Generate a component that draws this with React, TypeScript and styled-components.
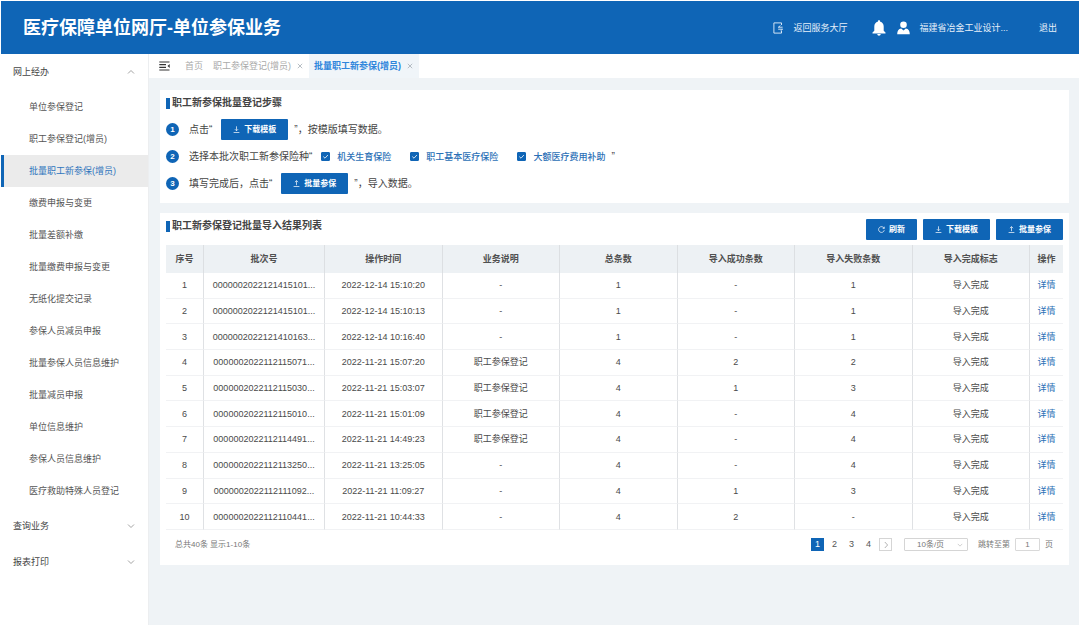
import React from 'react';
import styled, { createGlobalStyle, css } from 'styled-components';

const blue = '#0f65b6';
const pageBg = '#eff3f6';

const GlobalStyle = createGlobalStyle`
  *, *::before, *::after { box-sizing: border-box; }
  body {
    margin: 0;
    background: #fff;
    color: #4a4a4a;
    font-family: "Liberation Sans", "Noto Sans CJK SC", sans-serif;
    font-size: 9px;
    line-height: 14px;
  }
  button, input, select { font: inherit; color: inherit; margin: 0; }
  button { border: 0; padding: 0; background: none; cursor: pointer; }
  a { color: inherit; text-decoration: none; }
  h1, h2, ul, ol { margin: 0; padding: 0; }
  ul, ol { list-style: none; }
  svg { display: block; flex: none; }
`;

const Page = styled.div`
  min-height: 100vh;
  padding: 1px 1px 2px;
  display: grid;
  grid-template-rows: 53px 1fr;
`;

const Header = styled.header`
  display: flex;
  align-items: center;
  justify-content: space-between;
  padding: 0 22px;
  background: ${blue};
  color: #fff;
`;

const SiteTitle = styled.h1`
  font-size: 18px;
  line-height: 26px;
  font-weight: 700;
`;

const HeaderTools = styled.div`
  display: flex;
  align-items: center;
  color: #e6f0fa;
`;

const HeaderLink = styled.a`
  display: flex;
  align-items: center;
  gap: 10px;
  margin-right: 25px;
`;

const IconButton = styled.button`
  color: #fff;
  margin-right: 11px;
`;

const Account = styled.a`
  display: flex;
  align-items: center;
  gap: 9px;
  margin-right: 31px;
  svg { color: #fff; }
`;

const Body = styled.div`
  display: grid;
  grid-template-columns: 148px minmax(0, 1fr);
`;

const Sidebar = styled.nav`
  background: #fff;
  border-right: 1px solid #eceef0;
`;

const GroupButton = styled.button`
  width: 100%;
  height: 36px;
  padding: 0 13px 0 12px;
  display: flex;
  align-items: center;
  justify-content: space-between;
  color: #444;
  svg { color: #999; }
`;

const MenuList = styled.ul`
  padding: 1px 0;
`;

const MenuLink = styled.a<{ $active?: boolean }>`
  display: flex;
  align-items: center;
  height: 32px;
  padding-left: 25px;
  border-left: 3px solid transparent;
  color: #555;
  ${(p) =>
    p.$active &&
    css`
      background: #ebebeb;
      border-left-color: ${blue};
      color: #2f75bd;
    `}
`;

const Main = styled.main`
  background: ${pageBg};
`;

const TabBar = styled.div`
  display: flex;
  align-items: stretch;
  height: 24px;
  padding-left: 10px;
  background: #fff;
`;

const MenuToggle = styled.button`
  margin-right: 10px;
  color: #333;
`;

const Tab = styled.div<{ $active?: boolean }>`
  display: flex;
  align-items: center;
  gap: 5px;
  padding: 0 5px;
  color: #aaa;
  ${(p) =>
    p.$active &&
    css`
      background: #f0f5f9;
      color: #2f86dc;
      font-weight: 700;
    `}
`;

const TabClose = styled.button`
  width: 8px;
  height: 8px;
  display: grid;
  place-items: center;
  color: #a5adb5;
`;

const Content = styled.div`
  display: flex;
  flex-direction: column;
  gap: 10px;
  padding: 12px 10px 0 11px;
`;

const Card = styled.section`
  background: #fff;
  padding: 6px 6px 0;
`;

const CardTitle = styled.h2`
  display: flex;
  align-items: center;
  gap: 2px;
  font-size: 10px;
  line-height: 14px;
  font-weight: 700;
  color: #444;
  &::before {
    content: "";
    width: 4px;
    height: 11px;
    background: ${blue};
  }
`;

const Steps = styled.ol`
  display: flex;
  flex-direction: column;
  gap: 6px;
  padding: 9px 0;
`;

const Step = styled.li`
  display: flex;
  align-items: center;
  gap: 6px;
  height: 21px;
  font-size: 10px;
  color: #444;
`;

const StepNumber = styled.span`
  width: 13px;
  height: 13px;
  margin-right: 4px;
  border-radius: 50%;
  background: ${blue};
  color: #fff;
  font-size: 8px;
  font-weight: 700;
  line-height: 13px;
  text-align: center;
`;

const StepLead = styled.span`
  padding-right: 3px;
`;

const PrimaryButton = styled.button`
  display: flex;
  align-items: center;
  justify-content: center;
  gap: 4px;
  height: 21px;
  padding: 0 12px;
  border-radius: 1px;
  background: ${blue};
  color: #fff;
  font-size: 8px;
  font-weight: 700;
  white-space: nowrap;
`;

const Choices = styled.div`
  display: flex;
  gap: 19px;
`;

const Choice = styled.label`
  display: flex;
  align-items: center;
  gap: 7px;
  font-size: 9px;
  font-weight: 500;
  color: #2b70b6;
`;

const CheckFrame = styled.span`
  display: grid;
  place-items: center;
  > * { grid-area: 1 / 1; }
  svg { color: #fff; pointer-events: none; }
`;

const Checkbox = styled.input`
  appearance: none;
  width: 9px;
  height: 9px;
  border: 1px solid ${blue};
  border-radius: 1px;
  &:checked { background: ${blue}; }
`;

const CardHead = styled.div`
  display: flex;
  align-items: flex-start;
  justify-content: space-between;
  padding-bottom: 5px;
`;

const Actions = styled.div`
  display: flex;
  gap: 6px;
`;

const Table = styled.table`
  width: 100%;
  height: 285px;
  table-layout: fixed;
  border-collapse: separate;
  border-spacing: 0;
  text-align: center;
`;

const Col = styled.col<{ $width?: number }>`
  width: ${(p) => (p.$width ? `${p.$width}px` : 'auto')};
`;

const Th = styled.th`
  height: 28px;
  padding: 0;
  background: #edf1f4;
  border-right: 1px solid #dcdfe2;
  color: #505050;
  font-weight: 700;
  &:last-child { border-right: 0; }
`;

const Td = styled.td`
  padding: 0;
  border-right: 1px solid #dfe1e4;
  border-bottom: 1px solid #f1f2f4;
  white-space: nowrap;
  &:last-child { border-right: 0; }
`;

const DetailLink = styled.a`
  color: #2b70b6;
`;

const TableFoot = styled.div`
  display: flex;
  align-items: center;
  justify-content: space-between;
  padding: 8px 10px 14px 9px;
  font-size: 8px;
  line-height: 12px;
  color: #777;
`;

const Pager = styled.div`
  display: flex;
  align-items: center;
`;

const PageButton = styled.button<{ $active?: boolean; $boxed?: boolean }>`
  width: 13px;
  height: 13px;
  display: grid;
  place-items: center;
  margin-right: 4px;
  font-size: 9px;
  line-height: 13px;
  color: ${(p) => (p.$active ? '#fff' : p.$boxed ? '#aaa' : '#555')};
  background: ${(p) => (p.$active ? blue : 'transparent')};
  border: ${(p) => (p.$boxed ? '1px solid #d5d5d5' : '0')};
`;

const SelectFrame = styled.span`
  display: grid;
  align-items: center;
  margin: 0 10px 0 8px;
  > * { grid-area: 1 / 1; }
  svg { justify-self: end; margin-right: 5px; color: #bbb; pointer-events: none; }
`;

const PageSize = styled.select`
  appearance: none;
  width: 64px;
  height: 13px;
  padding: 0 0 0 12px;
  border: 1px solid #d5d5d5;
  border-radius: 1px;
  background: #fff;
  line-height: 11px;
`;

const Jump = styled.label`
  display: flex;
  align-items: center;
  gap: 5px;
`;

const JumpInput = styled.input`
  width: 25px;
  height: 13px;
  padding: 0;
  border: 1px solid #d9d9d9;
  border-radius: 1px;
  text-align: center;
`;

const line = { fill: 'none', stroke: 'currentColor', strokeWidth: 1 } as const;

const Chevron = ({ dir = 'down', size = 8 }: { dir?: 'down' | 'up' | 'right'; size?: number }) => {
  const d = { down: 'M1 2.5 4 5.5 7 2.5', up: 'M1 5.5 4 2.5 7 5.5', right: 'M2.8 1 5.6 4 2.8 7' }[dir];
  return (
    <svg width={size} height={size} viewBox="0 0 8 8" {...line} strokeWidth={0.9}>
      <path d={d} />
    </svg>
  );
};

const CloseIcon = () => (
  <svg width="6" height="6" viewBox="0 0 6 6" {...line} strokeWidth={0.8}>
    <path d="M.8.8 5.2 5.2M5.2.8.8 5.2" />
  </svg>
);

const HallIcon = () => (
  <svg width="10" height="12" viewBox="0 0 10 12" {...line} strokeWidth={0.9}>
    <path d="M8.500 3V.9H.9v10.200H8.500V9" />
    <path d="M5.200 5.200H9.600M7.400 3.600 5.400 5.200M5.200 7.200H9.600L7.600 8.800" />
  </svg>
);

const BellIcon = () => (
  <svg width="14" height="16" viewBox="0 0 14 16" fill="currentColor">
    <path d="M7 .2c.7 0 1.200.5 1.200 1.200v.4c2.200.5 3.500 2.400 3.500 4.700v4.200l1.800 1.700v1H.5v-1l1.800-1.700V6.500c0-2.300 1.300-4.200 3.500-4.700v-.4C5.800.7 6.300.2 7 .2zM5.300 14.100h3.400c0 1-.7 1.700-1.700 1.700s-1.700-.7-1.700-1.700z" />
  </svg>
);

const UserIcon = () => (
  <svg width="13" height="14" viewBox="0 0 13 14" fill="currentColor">
    <circle cx="6.500" cy="3.700" r="3.300" />
    <path d="M.2 13.200c0-3 1.300-5.200 4-5.600L6.500 9.600 8.800 7.600c2.700.4 4 2.600 4 5.600z" />
  </svg>
);

const FoldIcon = () => (
  <svg width="11" height="10" viewBox="0 0 11 10" {...line} strokeWidth={1.200}>
    <path d="M.3 1H10.500M.3 3.700H7M.3 6.300H7M.3 9H10.500" />
    <path d="M10.700 3 8.500 5 10.700 7z" fill="currentColor" stroke="none" />
  </svg>
);

const DownloadIcon = () => (
  <svg width="7" height="7" viewBox="0 0 7 7" {...line} strokeWidth={0.7}>
    <path d="M3.500.3V4.700M1.900 3.200 3.500 4.800 5.100 3.200M.6 6.500H6.400" />
  </svg>
);

const UploadIcon = () => (
  <svg width="7" height="7" viewBox="0 0 7 7" {...line} strokeWidth={0.7}>
    <path d="M3.500 5.200V.7M1.900 2.200 3.500.6 5.100 2.200M.6 6.500H6.400" />
  </svg>
);

const RefreshIcon = () => (
  <svg width="7" height="7" viewBox="0 0 7 7" {...line} strokeWidth={0.7}>
    <path d="M6.100 2.300A2.900 2.900 0 1 0 6.300 4.200M6.300.7V2.400H4.700" />
  </svg>
);

const TickIcon = () => (
  <svg width="7" height="7" viewBox="0 0 7 7" {...line} strokeWidth={0.8}>
    <path d="M1.300 3.600 3 5.200 5.900 2" />
  </svg>
);

const menu = [
  '单位参保登记', '职工参保登记(增员)', '批量职工新参保(增员)', '缴费申报与变更', '批量差额补缴',
  '批量缴费申报与变更', '无纸化提交记录', '参保人员减员申报', '批量参保人员信息维护', '批量减员申报',
  '单位信息维护', '参保人员信息维护', '医疗救助特殊人员登记',
];

const columns: { title: string; width?: number }[] = [
  { title: '序号', width: 38 },
  { title: '批次号', width: 121 },
  { title: '操作时间' },
  { title: '业务说明' },
  { title: '总条数' },
  { title: '导入成功条数' },
  { title: '导入失败条数' },
  { title: '导入完成标志' },
  { title: '操作', width: 33 },
];

const rows = [
  ['0000002022121415101...', '2022-12-14 15:10:20', '-', '1', '-', '1'],
  ['0000002022121415101...', '2022-12-14 15:10:13', '-', '1', '-', '1'],
  ['0000002022121410163...', '2022-12-14 10:16:40', '-', '1', '-', '1'],
  ['0000002022112115071...', '2022-11-21 15:07:20', '职工参保登记', '4', '2', '2'],
  ['0000002022112115030...', '2022-11-21 15:03:07', '职工参保登记', '4', '1', '3'],
  ['0000002022112115010...', '2022-11-21 15:01:09', '职工参保登记', '4', '-', '4'],
  ['0000002022112114491...', '2022-11-21 14:49:23', '职工参保登记', '4', '-', '4'],
  ['0000002022112113250...', '2022-11-21 13:25:05', '-', '4', '-', '4'],
  ['0000002022112111092...', '2022-11-21 11:09:27', '-', '4', '1', '3'],
  ['0000002022112110441...', '2022-11-21 10:44:33', '-', '4', '2', '-'],
];

const insurances = ['机关生育保险', '职工基本医疗保险', '大额医疗费用补助'];

export default function App() {
  return (
    <>
      <GlobalStyle />
      <Page lang="zh-CN">
        <Header>
          <SiteTitle>医疗保障单位网厅-单位参保业务</SiteTitle>
          <HeaderTools>
            <HeaderLink href="#hall"><HallIcon />返回服务大厅</HeaderLink>
            <IconButton type="button" aria-label="消息"><BellIcon /></IconButton>
            <Account href="#account"><UserIcon />福建省冶金工业设计...</Account>
            <button type="button">退出</button>
          </HeaderTools>
        </Header>
        <Body>
          <Sidebar>
            <GroupButton type="button" aria-expanded="true">网上经办<Chevron dir="up" /></GroupButton>
            <MenuList>
              {menu.map((name, i) => (
                <li key={name}>
                  <MenuLink href="#menu" $active={i === 2}>{name}</MenuLink>
                </li>
              ))}
            </MenuList>
            <GroupButton type="button" aria-expanded="false">查询业务<Chevron /></GroupButton>
            <GroupButton type="button" aria-expanded="false">报表打印<Chevron /></GroupButton>
          </Sidebar>
          <Main>
            <TabBar>
              <MenuToggle type="button" aria-label="收起菜单"><FoldIcon /></MenuToggle>
              <Tab><a href="#home">首页</a></Tab>
              <Tab>
                <a href="#add">职工参保登记(增员)</a>
                <TabClose type="button" aria-label="关闭"><CloseIcon /></TabClose>
              </Tab>
              <Tab $active>
                <a href="#batch">批量职工新参保(增员)</a>
                <TabClose type="button" aria-label="关闭"><CloseIcon /></TabClose>
              </Tab>
            </TabBar>
            <Content>
              <Card>
                <CardTitle>职工新参保批量登记步骤</CardTitle>
                <Steps>
                  <Step>
                    <StepNumber>1</StepNumber>
                    <StepLead>点击“</StepLead>
                    <PrimaryButton type="button"><DownloadIcon />下载模板</PrimaryButton>
                    <span>”，按模版填写数据。</span>
                  </Step>
                  <Step>
                    <StepNumber>2</StepNumber>
                    <StepLead>选择本批次职工新参保险种“</StepLead>
                    <Choices>
                      {insurances.map((name) => (
                        <Choice key={name}>
                          <CheckFrame><Checkbox type="checkbox" defaultChecked /><TickIcon /></CheckFrame>
                          {name}
                        </Choice>
                      ))}
                    </Choices>
                    <span>”</span>
                  </Step>
                  <Step>
                    <StepNumber>3</StepNumber>
                    <StepLead>填写完成后，点击“</StepLead>
                    <PrimaryButton type="button"><UploadIcon />批量参保</PrimaryButton>
                    <span>”，导入数据。</span>
                  </Step>
                </Steps>
              </Card>
              <Card>
                <CardHead>
                  <CardTitle>职工新参保登记批量导入结果列表</CardTitle>
                  <Actions>
                    <PrimaryButton type="button"><RefreshIcon />刷新</PrimaryButton>
                    <PrimaryButton type="button"><DownloadIcon />下载模板</PrimaryButton>
                    <PrimaryButton type="button"><UploadIcon />批量参保</PrimaryButton>
                  </Actions>
                </CardHead>
                <Table>
                  <colgroup>
                    {columns.map((c) => <Col key={c.title} $width={c.width} />)}
                  </colgroup>
                  <thead>
                    <tr>{columns.map((c) => <Th key={c.title} scope="col">{c.title}</Th>)}</tr>
                  </thead>
                  <tbody>
                    {rows.map((row, i) => (
                      <tr key={row[1]}>
                        <Td>{i + 1}</Td>
                        {row.map((cell, j) => <Td key={j}>{cell}</Td>)}
                        <Td>导入完成</Td>
                        <Td><DetailLink href="#detail">详情</DetailLink></Td>
                      </tr>
                    ))}
                  </tbody>
                </Table>
                <TableFoot>
                  <span>总共40条 显示1-10条</span>
                  <Pager>
                    <PageButton type="button" $active>1</PageButton>
                    <PageButton type="button">2</PageButton>
                    <PageButton type="button">3</PageButton>
                    <PageButton type="button">4</PageButton>
                    <PageButton type="button" $boxed aria-label="下一页"><Chevron dir="right" /></PageButton>
                    <SelectFrame>
                      <PageSize aria-label="每页条数" defaultValue="10">
                        <option value="10">10条/页</option>
                        <option value="20">20条/页</option>
                      </PageSize>
                      <Chevron size={6} />
                    </SelectFrame>
                    <Jump>跳转至第<JumpInput type="text" defaultValue="1" />页</Jump>
                  </Pager>
                </TableFoot>
              </Card>
            </Content>
          </Main>
        </Body>
      </Page>
    </>
  );
}
